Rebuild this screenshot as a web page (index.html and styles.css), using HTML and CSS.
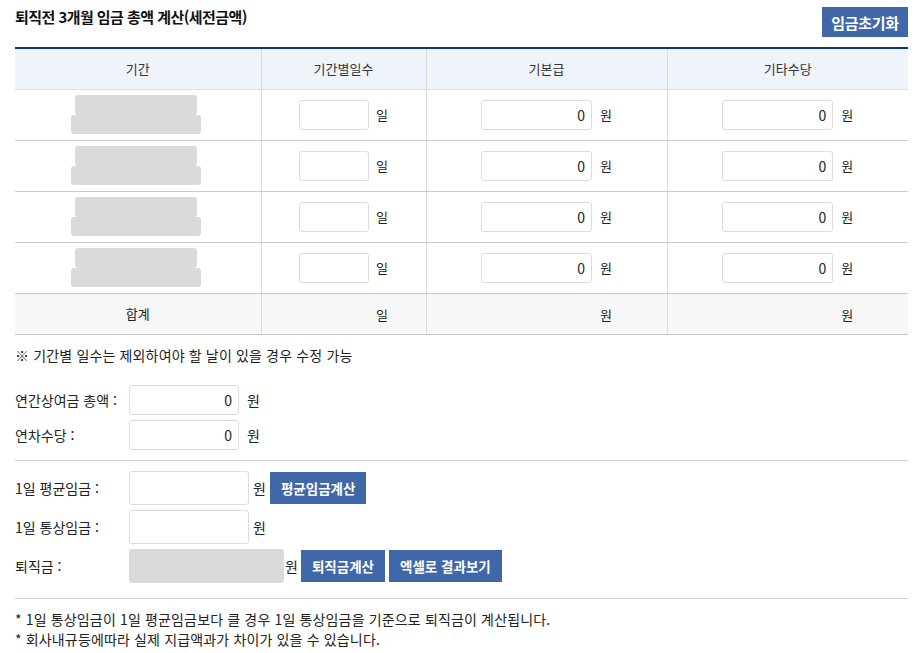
FILE: index.html
```html
<!DOCTYPE html>
<html lang="ko">
<head>
<meta charset="utf-8">
<title>퇴직금 계산</title>
<link rel="stylesheet" href="styles.css">
</head>
<body>
<div class="page">
  <div class="top">
    <h2 class="title">퇴직전 3개월 임금 총액 계산(세전금액)</h2>
    <button class="btn btn-lg" type="button">임금초기화</button>
  </div>

  <table class="grid">
    <colgroup>
      <col class="c1"><col class="c2"><col class="c3"><col class="c4">
    </colgroup>
    <thead>
      <tr><th>기간</th><th>기간별일수</th><th>기본급</th><th>기타수당</th></tr>
    </thead>
    <tbody>
      <tr>
        <td><div class="blur"><span class="b1"></span><span class="b2"></span></div></td>
        <td><span class="cell"><input class="in in-day" type="text"><span class="unit">일</span></span></td>
        <td><span class="cell"><input class="in in-won" type="text" value="0"><span class="unit">원</span></span></td>
        <td><span class="cell"><input class="in in-won" type="text" value="0"><span class="unit">원</span></span></td>
      </tr>
      <tr>
        <td><div class="blur"><span class="b1"></span><span class="b2"></span></div></td>
        <td><span class="cell"><input class="in in-day" type="text"><span class="unit">일</span></span></td>
        <td><span class="cell"><input class="in in-won" type="text" value="0"><span class="unit">원</span></span></td>
        <td><span class="cell"><input class="in in-won" type="text" value="0"><span class="unit">원</span></span></td>
      </tr>
      <tr>
        <td><div class="blur"><span class="b1"></span><span class="b2"></span></div></td>
        <td><span class="cell"><input class="in in-day" type="text"><span class="unit">일</span></span></td>
        <td><span class="cell"><input class="in in-won" type="text" value="0"><span class="unit">원</span></span></td>
        <td><span class="cell"><input class="in in-won" type="text" value="0"><span class="unit">원</span></span></td>
      </tr>
      <tr>
        <td><div class="blur"><span class="b1"></span><span class="b2"></span></div></td>
        <td><span class="cell"><input class="in in-day" type="text"><span class="unit">일</span></span></td>
        <td><span class="cell"><input class="in in-won" type="text" value="0"><span class="unit">원</span></span></td>
        <td><span class="cell"><input class="in in-won" type="text" value="0"><span class="unit">원</span></span></td>
      </tr>
    </tbody>
    <tfoot>
      <tr>
        <td>합계</td>
        <td><span class="cell"><span class="sum in-day"></span><span class="unit">일</span></span></td>
        <td><span class="cell"><span class="sum in-won"></span><span class="unit">원</span></span></td>
        <td><span class="cell"><span class="sum in-won"></span><span class="unit">원</span></span></td>
      </tr>
    </tfoot>
  </table>

  <p class="note">※ 기간별 일수는 제외하여야 할 날이 있을 경우 수정 가능</p>

  <div class="form form-a">
    <div class="row"><span class="label">연간상여금 총액 :</span><input class="in in-a" type="text" value="0"><span class="unit">원</span></div>
    <div class="row"><span class="label">연차수당 :</span><input class="in in-a" type="text" value="0"><span class="unit">원</span></div>
  </div>

  <hr class="line">

  <div class="form form-b">
    <div class="row"><span class="label">1일 평균임금 :</span><input class="in in-b" type="text"><span class="unit u-b">원</span><button class="btn" type="button">평균임금계산</button></div>
    <div class="row"><span class="label">1일 통상임금 :</span><input class="in in-b" type="text"><span class="unit u-b">원</span></div>
    <div class="row"><span class="label">퇴직금 :</span><span class="result"></span><span class="unit u-c">원</span><button class="btn" type="button">퇴직금계산</button><button class="btn" type="button">엑셀로 결과보기</button></div>
  </div>

  <hr class="line line-b">

  <div class="foot">
    <p>* 1일 통상임금이 1일 평균임금보다 클 경우 1일 통상임금을 기준으로 퇴직금이 계산됩니다.</p>
    <p>* 회사내규등에따라 실제 지급액과가 차이가 있을 수 있습니다.</p>
  </div>
</div>
</body>
</html>
```

FILE: styles.css
```css
* { box-sizing: border-box; }
html, body { margin: 0; padding: 0; background: #fff; }
body {
  font-family: "Noto Sans CJK KR", "Noto Sans", sans-serif;
  font-size: 13px;
  color: #222;
}
.page { padding: 7px 10px 0 15px; width: 918px; }

.top {
  display: flex;
  justify-content: space-between;
  align-items: center;
  height: 30px;
}
.title {
  margin: 0;
  font-size: 15px;
  font-weight: 700;
  letter-spacing: -0.55px;
  color: #111;
  align-self: flex-start;
  line-height: 20px;
}

.btn {
  border: 0;
  background: #4068a8;
  color: #fff;
  font-family: inherit;
  font-weight: 700;
  font-size: 13.5px;
  height: 32px;
  padding: 0 11px;
  cursor: pointer;
}
.btn-lg { font-size: 15px; height: 30px; padding: 0 9px; width: 86px; letter-spacing: -0.3px; }

.grid {
  margin-top: 10px;
  width: 893px;
  border-collapse: collapse;
  table-layout: fixed;
  border-top: 2px solid #0c3a66;
}
.c1 { width: 246px; }
.c2 { width: 165px; }
.c3 { width: 241px; }
.c4 { width: 241px; }
.grid th {
  background: #eff3fa;
  font-weight: 400;
  color: #333;
  height: 41px;
  padding: 0;
  border-left: 1px solid #dcdcdc;
  border-bottom: 1px solid #dcdcdc;
}
.grid td {
  height: 51px;
  padding: 0;
  text-align: center;
  border-left: 1px solid #dcdcdc;
  border-bottom: 1px solid #cacaca;
}
.grid th:first-child, .grid td:first-child { border-left: 0; }
.grid tfoot td {
  background: #f7f7f7;
  height: 41px;
  border-top: 1px solid #0c3a66;
  border-bottom: 1px solid #c8c8c8;
  color: #222;
}

.blur {
  display: flex;
  flex-direction: column;
  align-items: center;
  margin-left: -4px;
}
.blur span { display: block; background: #dadada; border-radius: 3px; }
.b1 { width: 122px; height: 20px; border-radius: 3px 3px 0 0; }
.b2 { width: 130px; height: 19px; }

.cell {
  display: inline-flex;
  align-items: center;
  vertical-align: middle;
}
.in {
  border: 1px solid #dcdcdc;
  border-radius: 3px;
  height: 30px;
  padding: 0 6px;
  text-align: right;
  font-family: inherit;
  font-size: 14px;
  color: #222;
  background: #fff;
  outline: none;
}
.in-day { width: 70px; }
.in-won { width: 111px; }
.sum { display: inline-block; height: 1px; }
.unit { margin-left: 7px; color: #222; font-size: 13px; }
.cell .in-won + .unit, .cell .sum.in-won + .unit { margin-left: 8px; }

.note { margin: 10px 0 0; line-height: 20px; font-size: 14px; letter-spacing: 0.15px; }

.form { font-size: 14px; }
.form .row { display: flex; align-items: center; }
.label { width: 114px; flex: none; white-space: nowrap; }
.form-a { margin-top: 20px; display: flex; flex-direction: column; gap: 5px; }
.in-a { width: 110px; }
.form-a .unit { margin-left: 8px; font-size: 14px; }

.line {
  border: 0;
  border-top: 1px solid #cfcfcf;
  margin: 10px 0 0;
  width: 893px;
}
.form-b { margin-top: 10px; display: flex; flex-direction: column; gap: 5px; }
.form-b .unit { font-size: 14px; }
.in-b { width: 120px; height: 34px; }
.u-b { margin-left: 4px; margin-right: 4px; }
.result {
  display: block;
  width: 155px;
  height: 34px;
  background: #dadada;
  border-radius: 3px;
}
.form-b .u-c { margin-left: 1px; margin-right: 3px; }
.form-b .btn + .btn { margin-left: 4px; }

.line-b { margin-top: 15px; }
.foot { margin-top: 10px; font-size: 14px; letter-spacing: 0.15px; }
.foot p { margin: 0; line-height: 20px; }
```
